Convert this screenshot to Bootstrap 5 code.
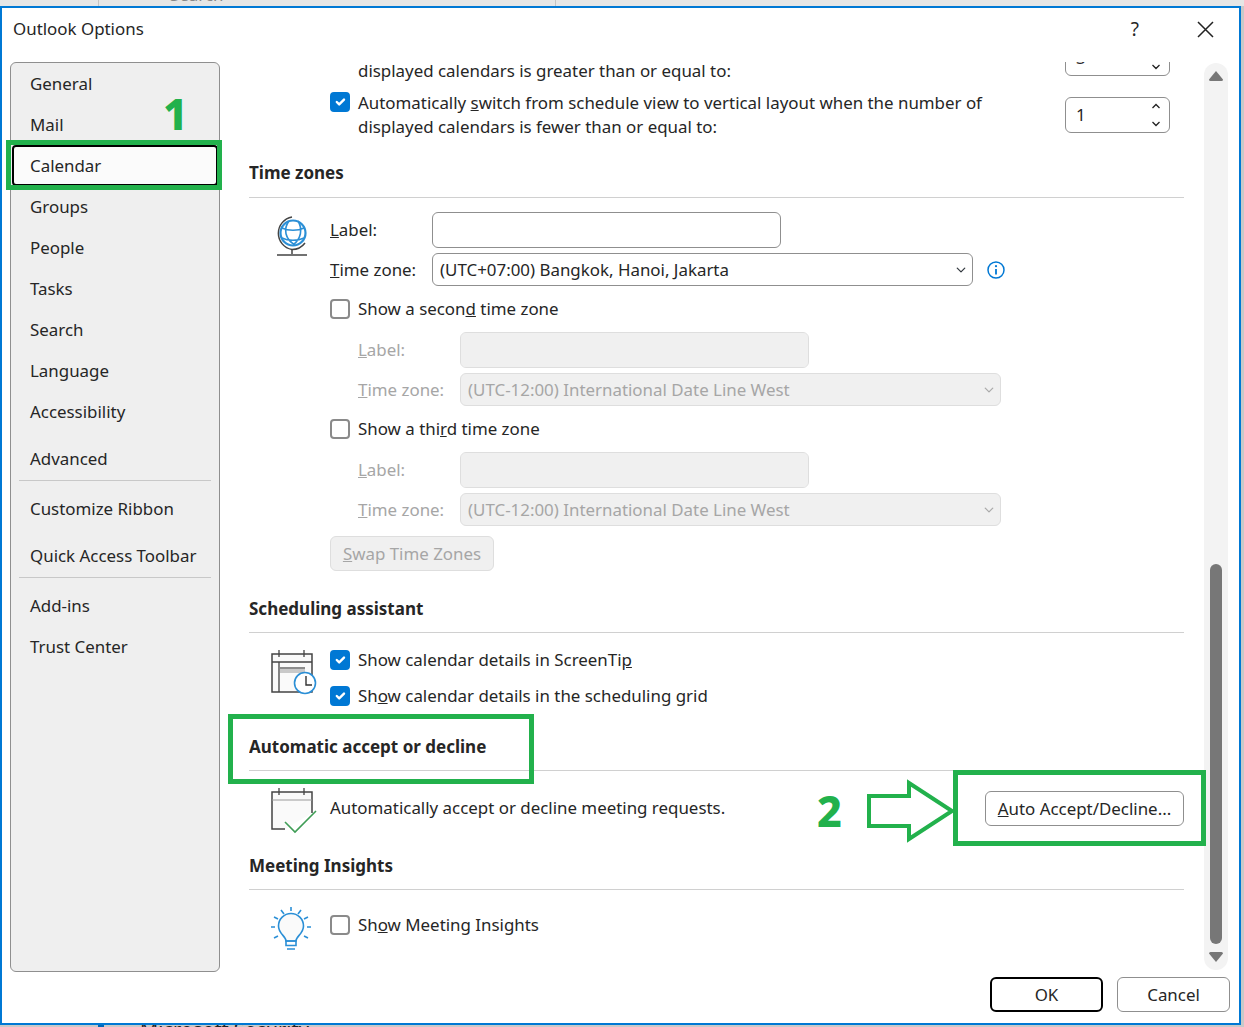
<!DOCTYPE html>
<html lang="en">

<head>
    <meta charset="UTF-8" />
    <meta name="viewport" content="width=device-width, initial-scale=1.0" />
    <title>Outlook Options</title>
    <link href="https://cdn.jsdelivr.net/npm/bootstrap@5.3.3/dist/css/bootstrap.min.css" rel="stylesheet" />
    <style>
        html, body { height: 100%; }
        body { background: #c9c9c9; font-family: "Noto Sans", "Open Sans", sans-serif; font-size: 16.9px; color: #262626; overflow: hidden; }
        .page-root { position: relative; width: 1244px; height: 1027px; overflow: hidden; }
        .behind-top { height: 6px; background: #e6e6e6; overflow: hidden; position: relative; }
        .behind-top span { position: absolute; left: 170px; top: -18px; color: #888; }
        .behind-line { position: absolute; top: 0; width: 1px; height: 6px; background: #c4c4c4; }
        .line-a { left: 98px; }
        .line-b { left: 555px; }
        .behind-bottom { position: absolute; left: 140px; top: 1015px; font-size: 20px; color: #222; }
        .behind-tab { position: absolute; left: 98px; top: 1025px; width: 6px; height: 2px; background: #0067b8; }
        .dlg { width: 1241px; height: 1019px; background: #fff; border: 2px solid #0078d4; display: flex; flex-direction: column; position: relative; z-index: 1; }
        .dlg-title { height: 54px; flex: none; padding: 7px 25px 0 11px; line-height: 28px; }
        .help-q { font-size: 19px; margin-right: 58px; }
        .dlg-body { height: 910px; flex: none; }
        .side-pane { width: 210px; margin-left: 8px; background: #efefef; border: 1px solid #8f8f8f; border-radius: 6px; flex: none; }
        .side-item { height: 41px; line-height: 41px; padding-left: 19px; }
        .side-item.is-active { background: #fbfbfb; border: 2px solid #000; border-radius: 4px; margin: 0 1px; padding-left: 16px; line-height: 37px; }
        .side-item.push { margin-top: 6px; }
        .side-sep { border-top: 1px solid #c8c8c8; margin: 1px 8px 7px 8px; height: 0; }
        .main-pane { width: 935px; margin-left: 29px; flex: none; overflow: hidden; line-height: 24px; }
        .cal-row1 { margin-top: -27px; height: 56px; padding-left: 81px; }
        .cal-row2 { height: 48px; padding-left: 81px; position: relative; }
        .cal-text { padding-left: 28px; width: 735px; }
        .cal-row1 .cal-text { padding-top: 24px; }
        .cal-row1 .spin-box { margin-top: 5px; }
        .cal-row2 .spin-box { margin-top: 6px; }
        .cal-row2 .form-check-input.opt-chk { position: absolute; margin-top: 1px; }
        .spin-box { width: 105px; height: 36px; border: 1px solid #8f8f8f; border-radius: 6px; padding: 0 8px 0 10px; }
        .spin-box svg { display: block; }
        .sec-head { font-weight: 700; font-size: 17px; height: 36px; line-height: 24px; border-bottom: 1px solid #d0d0d0; }
        .sec-head.is-tall { height: 37px; }
        .icon-col { width: 81px; flex: none; position: relative; }
        .icon-col svg { position: absolute; left: 0; top: 0; }
        .lbl-main { width: 102px; flex: none; }
        .form-control.opt-in, .form-select.opt-in { width: 349px; height: 36px; border: 1px solid #8f8f8f; border-radius: 6px; font-size: 16.9px; color: #262626; padding: 0 7px; }
        .form-select.opt-in { width: 541px; height: 33px; background-size: 12px 10px; background-position: right 5px center; }
        .form-control.opt-in:disabled, .form-select.opt-in:disabled { background-color: #f0f0f0; border-color: #dedede; color: #a6a6a6; }
        .form-select.opt-in:disabled { background-image: url("data:image/svg+xml,%3csvg xmlns='http://www.w3.org/2000/svg' viewBox='0 0 16 16'%3e%3cpath fill='none' stroke='%23aaaaaa' stroke-linecap='round' stroke-linejoin='round' stroke-width='2' d='m2 5 6 6 6-6'/%3e%3c/svg%3e"); }
        .is-off { color: #a6a6a6; }
        .sub-col { padding-left: 28px; }
        .info-ico { margin-left: 14px; }
        .form-check-input.opt-chk { width: 20px; height: 20px; margin: 0 8px 0 0; border: 2px solid #8a8a8a; border-radius: 4px; flex: none; }
        .form-check-input.opt-chk:checked { background-color: #0078d4; border-color: #0078d4; }
        .row-chk { height: 24px; }
        .gap-5px { margin-top: 5px; }
        .gap-10 { margin-top: 10px; }
        .gap-11 { margin-top: 11px; }
        .gap-12 { margin-top: 12px; }
        .gap-14 { margin-top: 14px; }
        .gap-15 { margin-top: 15px; }
        .gap-19 { margin-top: 19px; }
        .gap-22 { margin-top: 22px; }
        .gap-23 { margin-top: 23px; }
        .gap-26 { margin-top: 26px; }
        .gap-27 { margin-top: 27px; }
        .gap-28 { margin-top: 28px; }
        .btn.opt-btn { background: #fff; border: 1px solid #8f8f8f; border-radius: 6px; color: #262626; font-size: 16.9px; padding: 0; height: 35px; line-height: 33px; }
        .btn.btn-swap { display: block; width: 164px; background: #f0f0f0; border-color: #dedede; color: #a6a6a6; opacity: 1; }
        .btn.btn-auto { width: 199px; }
        .auto-row { height: 36px; }
        .scroll-track { width: 24px; margin-left: 20px; margin-top: 1px; background: #f3f3f3; border-radius: 12px; flex: none; padding: 8px 5px 8px; height: 907px; }
        .scroll-thumb { width: 12px; height: 380px; background: #777; border-radius: 6px; margin-top: auto; margin-bottom: 8px; }
        .arrow-end { width: 14px; height: 10px; flex: none; }
        .dlg-foot { padding-top: 5px; padding-right: 9px; gap: 14px; }
        .btn.foot-btn { width: 113px; height: 35px; padding: 0; line-height: 33px; border: 1px solid #8f8f8f; border-radius: 6px; background: #fff; color: #262626; font-size: 16.9px; }
        .btn.foot-btn.is-default { border: 2px solid #000; line-height: 31px; }
        .mark-box { position: absolute; border: 5px solid #22b14c; z-index: 3; pointer-events: none; }
        .mark-1 { left: 6px; top: 140px; width: 216px; height: 50px; }
        .mark-2 { left: 228px; top: 714px; width: 306px; height: 70px; }
        .mark-3 { left: 953px; top: 770px; width: 253px; height: 76px; }
        .mark-num { position: absolute; color: #22b14c; font-weight: 800; font-size: 43px; line-height: 1; z-index: 3; }
        .num-1 { left: 163px; top: 92px; }
        .num-2 { left: 817px; top: 789px; }
        .mark-arrow { position: absolute; left: 865px; top: 777px; z-index: 3; }
    </style>
</head>

<body>
    <div class="page-root">
        <div class="behind-top"><span>Search</span><i class="behind-line line-a"></i><i class="behind-line line-b"></i></div>

        <div class="dlg">
            <!-- barra de titulo -->
            <div class="dlg-title d-flex justify-content-between">
                <span>Outlook Options</span>
                <span class="d-flex align-items-center align-self-start">
                    <span class="help-q">?</span>
                    <svg width="17" height="17" viewBox="0 0 17 17" aria-hidden="true"><path d="M1 1 16 16M16 1 1 16" stroke="#222" stroke-width="1.5" fill="none" /></svg>
                </span>
            </div>

            <div class="dlg-body d-flex">
                <!-- menu lateral -->
                <div class="side-pane">
                    <div class="side-item">General</div>
                    <div class="side-item">Mail</div>
                    <div class="side-item is-active">Calendar</div>
                    <div class="side-item">Groups</div>
                    <div class="side-item">People</div>
                    <div class="side-item">Tasks</div>
                    <div class="side-item">Search</div>
                    <div class="side-item">Language</div>
                    <div class="side-item">Accessibility</div>
                    <div class="side-item push">Advanced</div>
                    <div class="side-sep"></div>
                    <div class="side-item">Customize Ribbon</div>
                    <div class="side-item push">Quick Access Toolbar</div>
                    <div class="side-sep"></div>
                    <div class="side-item">Add-ins</div>
                    <div class="side-item">Trust Center</div>
                </div>

                <!-- contenido -->
                <div class="main-pane">
                    <div class="cal-row1 d-flex">
                        <div class="cal-text">displayed calendars is greater than or equal to:</div>
                        <div class="spin-box d-flex justify-content-between align-items-center">
                            <span>3</span>
                            <svg width="10" height="24" viewBox="0 0 10 24" aria-hidden="true"><path d="M1.500 5 5 1.500 8.500 5M1.500 19 5 22.500 8.500 19" stroke="#222" stroke-width="1.300" fill="none" /></svg>
                        </div>
                    </div>
                    <div class="cal-row2 d-flex">
                        <input class="form-check-input opt-chk" type="checkbox" checked aria-label="switch" />
                        <div class="cal-text">Automatically <u>s</u>witch from schedule view to vertical layout when the number of<br />displayed calendars is fewer than or equal to:</div>
                        <div class="spin-box d-flex justify-content-between align-items-center">
                            <span>1</span>
                            <svg width="10" height="24" viewBox="0 0 10 24" aria-hidden="true"><path d="M1.500 5 5 1.500 8.500 5M1.500 19 5 22.500 8.500 19" stroke="#222" stroke-width="1.300" fill="none" /></svg>
                        </div>
                    </div>

                    <div class="sec-head is-tall gap-22">Time zones</div>
                    <div class="d-flex">
                        <div class="icon-col">
                            <svg width="81" height="70" viewBox="0 0 81 70" aria-hidden="true">
                                <path d="M43 19A16.500 16.500 0 0 0 43 51.500C49 51.500 53 49 56 45" fill="none" stroke="#444" stroke-width="1.500" />
                                <path d="M43 51.500V56M28 57H58" fill="none" stroke="#444" stroke-width="1.500" />
                                <circle cx="44" cy="35" r="12.500" fill="#fff" stroke="#2b8fd6" stroke-width="2.200" />
                                <path d="M33 30C39 33 49 33 55 30M33 40C39 43 49 43 55 40M40 23C34 31 36 41 46 47M49 23C54 31 52 41 44 47" fill="none" stroke="#2b8fd6" stroke-width="1.600" />
                            </svg>
                        </div>
                        <div class="flex-grow-1">
                            <div class="d-flex align-items-center gap-14">
                                <span class="lbl-main"><u>L</u>abel:</span>
                                <input class="form-control opt-in" type="text" aria-label="label" />
                            </div>
                            <div class="d-flex align-items-center gap-5px">
                                <span class="lbl-main"><u>T</u>ime zone:</span>
                                <select class="form-select opt-in" aria-label="zone"><option>(UTC+07:00) Bangkok, Hanoi, Jakarta</option></select>
                                <svg class="info-ico" width="18" height="18" viewBox="0 0 18 18" aria-hidden="true"><circle cx="9" cy="9" r="8" fill="none" stroke="#0078d4" stroke-width="1.500" /><path d="M9 8V13.500" stroke="#0078d4" stroke-width="1.800" /><circle cx="9" cy="5.200" r="1.100" fill="#0078d4" /></svg>
                            </div>
                            <div class="d-flex align-items-center row-chk gap-11">
                                <input class="form-check-input opt-chk" type="checkbox" aria-label="second" /><span>Show a secon<u>d</u> time zone</span>
                            </div>
                            <div class="sub-col">
                                <div class="d-flex align-items-center gap-11">
                                    <span class="lbl-main is-off"><u>L</u>abel:</span>
                                    <input class="form-control opt-in" type="text" disabled aria-label="label 2" />
                                </div>
                                <div class="d-flex align-items-center gap-5px">
                                    <span class="lbl-main is-off"><u>T</u>ime zone:</span>
                                    <select class="form-select opt-in" disabled aria-label="zone 2"><option>(UTC-12:00) International Date Line West</option></select>
                                </div>
                            </div>
                            <div class="d-flex align-items-center row-chk gap-11">
                                <input class="form-check-input opt-chk" type="checkbox" aria-label="third" /><span>Show a thi<u>r</u>d time zone</span>
                            </div>
                            <div class="sub-col">
                                <div class="d-flex align-items-center gap-11">
                                    <span class="lbl-main is-off"><u>L</u>abel:</span>
                                    <input class="form-control opt-in" type="text" disabled aria-label="label 3" />
                                </div>
                                <div class="d-flex align-items-center gap-5px">
                                    <span class="lbl-main is-off"><u>T</u>ime zone:</span>
                                    <select class="form-select opt-in" disabled aria-label="zone 3"><option>(UTC-12:00) International Date Line West</option></select>
                                </div>
                            </div>
                            <button class="btn opt-btn btn-swap gap-10" disabled type="button"><u>S</u>wap Time Zones</button>
                        </div>
                    </div>

                    <div class="sec-head gap-26">Scheduling assistant</div>
                    <div class="d-flex">
                        <div class="icon-col">
                            <svg width="81" height="70" viewBox="0 0 81 70" aria-hidden="true">
                                <g transform="translate(22 17)">
                                    <path d="M1 4H41V42H1Z" fill="#fafafa" stroke="#444" stroke-width="1.500" />
                                    <path d="M1 12H41M8 12V42M8 0V7M33 0V7" fill="none" stroke="#444" stroke-width="1.300" />
                                    <path d="M9 17H34V19H9Z" fill="#8d8d8d" />
                                    <path d="M9 19H34V23H9Z" fill="#c9c9c9" />
                                    <circle cx="34" cy="33" r="10.500" fill="#fff" stroke="#2b8fd6" stroke-width="1.600" />
                                    <path d="M35 26V35H41" fill="none" stroke="#333" stroke-width="1.400" />
                                </g>
                            </svg>
                        </div>
                        <div>
                            <div class="d-flex align-items-center row-chk gap-15"><input class="form-check-input opt-chk" type="checkbox" checked aria-label="tip" /><span>Show calendar details in ScreenTi<u>p</u></span></div>
                            <div class="d-flex align-items-center row-chk gap-12"><input class="form-check-input opt-chk" type="checkbox" checked aria-label="grid" /><span>Sh<u>o</u>w calendar details in the scheduling grid</span></div>
                        </div>
                    </div>

                    <div class="sec-head gap-27">Automatic accept or decline</div>
                    <div class="d-flex">
                        <div class="icon-col">
                            <svg width="81" height="70" viewBox="0 0 81 70" aria-hidden="true">
                                <g transform="translate(22 17)">
                                    <path d="M41 25V4H1V41H14" fill="#fafafa" stroke="#444" stroke-width="1.500" />
                                    <path d="M1 12H41" fill="none" stroke="#9a9a9a" stroke-width="1.200" />
                                    <path d="M8 0V7M33 0V7" fill="none" stroke="#444" stroke-width="1.300" />
                                    <path d="M14 34 24 44 45 23" fill="none" stroke="#3f9d56" stroke-width="1.600" />
                                </g>
                            </svg>
                        </div>
                        <div class="d-flex flex-grow-1 justify-content-between align-items-center auto-row gap-19">
                            <span>Automatically accept or decline meeting requests.</span>
                            <button class="btn opt-btn btn-auto" type="button"><u>A</u>uto Accept/Decline...</button>
                        </div>
                    </div>

                    <div class="sec-head gap-28">Meeting Insights</div>
                    <div class="d-flex">
                        <div class="icon-col">
                            <svg width="81" height="70" viewBox="0 0 81 70" aria-hidden="true">
                                <g fill="none" stroke="#2b8fd6" stroke-width="1.600">
                                    <path d="M42 17V21M32 20 35 24M52 20 49 24M25 27 29 29M59 27 55 29M22 37H26M58 37H62M25 48 29 46M59 48 55 46" />
                                    <path d="M37 51C37 46 29.500 44 29.500 36A12.500 12.500 0 0 1 54.500 36C54.500 44 47 46 47 51Z" fill="#fafafa" />
                                    <path d="M37 51H47V55.500H37ZM38 59H46" />
                                </g>
                            </svg>
                        </div>
                        <div class="d-flex align-items-center row-chk gap-23">
                            <input class="form-check-input opt-chk" type="checkbox" aria-label="insights" /><span>Sh<u>o</u>w Meeting Insights</span>
                        </div>
                    </div>
                </div>

                <!-- scrollbar -->
                <div class="scroll-track d-flex flex-column align-items-center">
                    <svg class="arrow-end" viewBox="0 0 14 10" aria-hidden="true"><path d="M7 0 14 8.500Q14 10 12.500 10H1.500Q0 10 0 8.500Z" fill="#777" /></svg>
                    <div class="scroll-thumb"></div>
                    <svg class="arrow-end" viewBox="0 0 14 10" aria-hidden="true"><path d="M7 10 14 1.500Q14 0 12.500 0H1.500Q0 0 0 1.500Z" fill="#777" /></svg>
                </div>
            </div>

            <div class="dlg-foot d-flex justify-content-end">
                <button class="btn foot-btn is-default" type="button">OK</button>
                <button class="btn foot-btn" type="button">Cancel</button>
            </div>
        </div>

        <div class="behind-tab"></div>
        <div class="behind-bottom">Microsoft Security</div>

        <!-- marcas verdes -->
        <div class="mark-box mark-1"></div>
        <div class="mark-box mark-2"></div>
        <div class="mark-box mark-3"></div>
        <div class="mark-num num-1">1</div>
        <div class="mark-num num-2">2</div>
        <svg class="mark-arrow" width="92" height="70" viewBox="0 0 92 70" aria-hidden="true"><path d="M4 19H44V6L87 34 44 62V49H4Z" fill="none" stroke="#22b14c" stroke-width="4" /></svg>
    </div>
</body>

</html>
